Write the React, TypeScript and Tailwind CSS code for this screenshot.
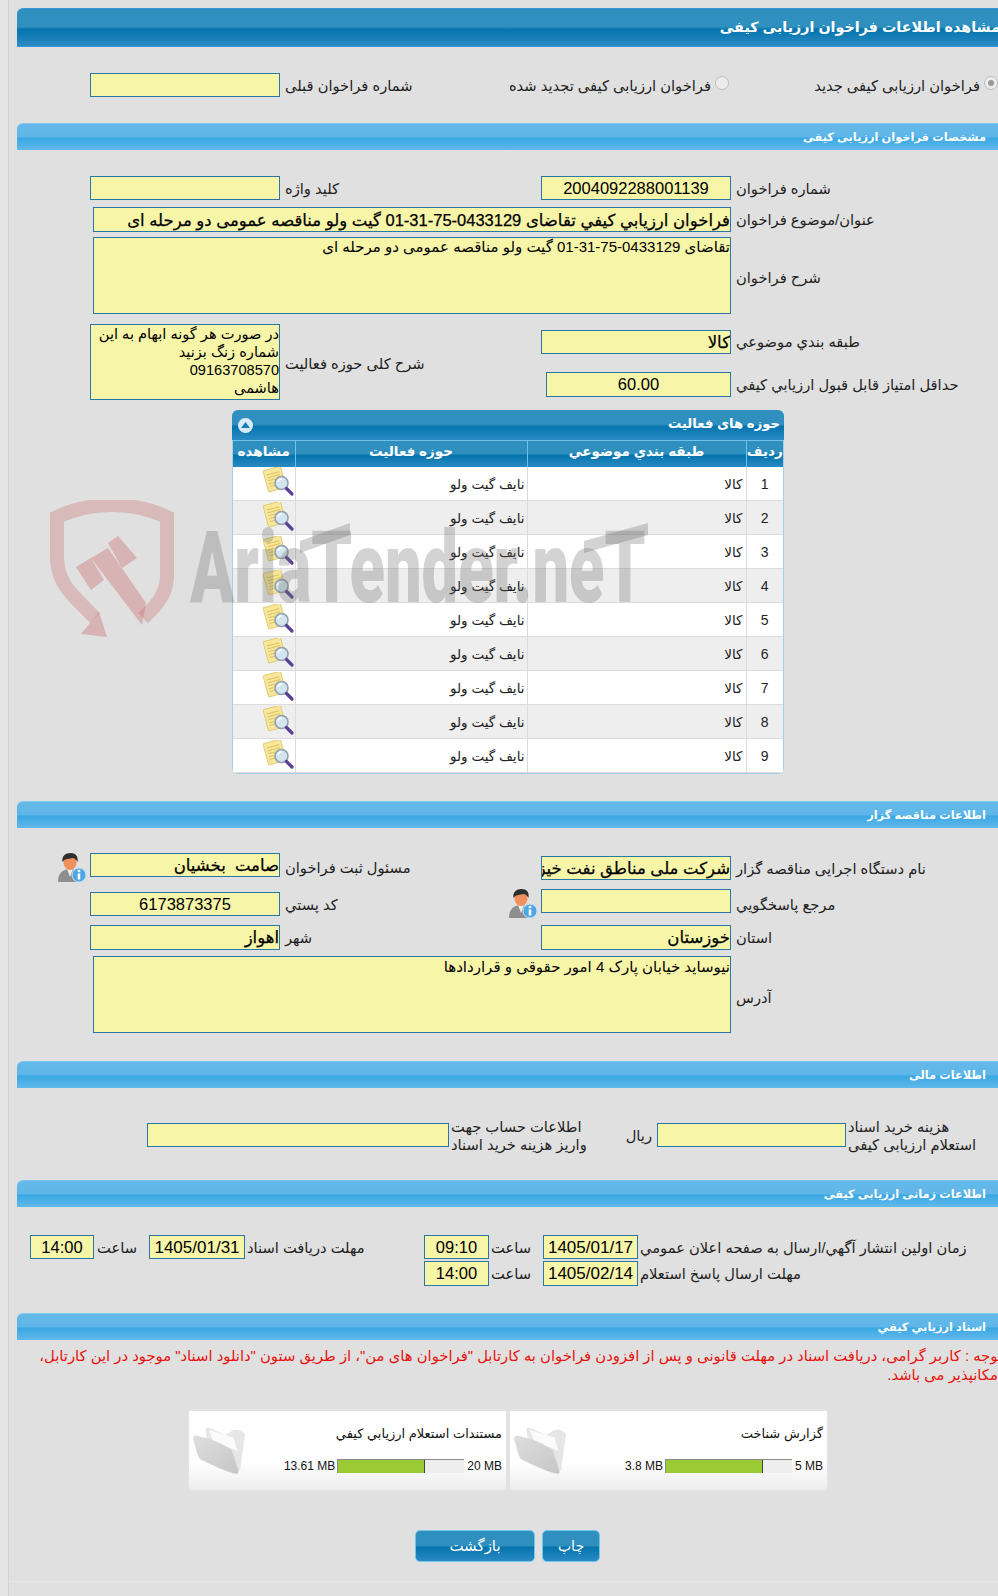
import React from "react";

const font = "font-['Liberation_Sans','DejaVu_Sans',sans-serif]";
const barGrad = "bg-[linear-gradient(#2f90bf_0%,#2f90bf_48%,#0574ad_55%,#2a8ac4_100%)]";
const strong = "[-webkit-text-stroke:0.25px_#000]";

function Inp({ className, t = "text-[16.5px] leading-[23px]", children }: { className: string; t?: string; children?: React.ReactNode }) {
  return (
    <div dir="rtl" className={`shrink-0 overflow-hidden whitespace-nowrap border border-[#2a77a6] bg-[#f7f5a8] text-black ${t} ${className}`}>
      {children}
    </div>
  );
}

function Num({ className, t = "text-[16.5px]", children }: { className: string; t?: string; children?: React.ReactNode }) {
  return (
    <div className={`shrink-0 overflow-hidden whitespace-nowrap border border-[#2a77a6] bg-[#f7f5a8] text-center leading-[23px] text-black ${t} ${className}`}>
      {children}
    </div>
  );
}

function Lbl({ className = "", m = "mt-[1px]", children }: { className?: string; m?: string; children: React.ReactNode }) {
  return (
    <div dir="rtl" className={`shrink-0 whitespace-nowrap text-left text-[14.7px] leading-[18px] text-[#222] ${m} ${className}`}>
      {children}
    </div>
  );
}

function Section({ title, className }: { title: string; className: string }) {
  return (
    <div dir="rtl" className={`h-[27px] rounded-t-[6px] border-t border-[#7cc8f0] bg-[linear-gradient(#64b9e9_0%,#5fb6e8_48%,#3aa8e2_55%,#62b9ec_100%)] pr-[20px] text-[11.4px] font-bold leading-[26px] text-white ${className}`}>
      {title}
    </div>
  );
}

function DocIcon() {
  return (
    <svg width="32" height="32" viewBox="0 0 32 32">
      <g transform="rotate(-15 12 12)">
        <rect x="2.500" y="1" width="18" height="22" rx="1" fill="#f8e79a" stroke="#e0cb7a" />
        <path d="M5 6h13M5 9h13M5 12h7M5 15h5M5 18h6" stroke="#dcc264" strokeWidth="1" />
      </g>
      <circle cx="18.500" cy="16" r="6.500" fill="#d3e5ee" stroke="#93a0ae" strokeWidth="1.600" />
      <path d="M15 15a4 4 0 0 1 4-3" stroke="#fff" strokeWidth="1.500" fill="none" />
      <path d="M23.500 21.500l5.500 5.500" stroke="#5a3f96" strokeWidth="3.200" strokeLinecap="round" />
    </svg>
  );
}

function PersonIcon() {
  return (
    <svg width="30" height="30" viewBox="0 0 30 30">
      <path d="M1 29c0-8 4-13 12-13s12 5 12 13z" fill="#8e8e8e" />
      <path d="M10 16l3 8 3-8z" fill="#ececec" />
      <ellipse cx="13" cy="9.500" rx="6.500" ry="7.500" fill="#f0905a" />
      <path d="M5.500 9c-1-6 3-9 8-9s8 3 7 9c-2-3-3-4-5-4-3 1-7 0-10 4z" fill="#2f2f2d" />
      <circle cx="22" cy="22" r="7" fill="#4ea6e2" stroke="#c6e3f7" />
      <rect x="20.700" y="20.500" width="2.600" height="6" fill="#fff" />
      <rect x="20.700" y="16.800" width="2.600" height="2.400" fill="#fff" />
    </svg>
  );
}

function FolderIcon() {
  return (
    <svg width="57" height="53" viewBox="0 35 170 160">
      <defs>
        <linearGradient id="fold" x1="0" y1="0" x2="1" y2="1">
          <stop offset="0" stopColor="#dedede" />
          <stop offset="1" stopColor="#c6c6c6" />
        </linearGradient>
      </defs>
      <path d="M45 45Q50 38 60 42L105 62 125 50Q150 40 165 60L150 170 60 130Z" fill="#e6e6e6" />
      <path d="M55 46 130 70 142 110 70 82Z" fill="#fbfbfb" />
      <path d="M8 72Q10 62 20 65L60 75Q90 85 125 108L145 170Q148 182 130 178 90 165 30 135 25 130 22 120Z" fill="url(#fold)" stroke="#d6d6d6" />
    </svg>
  );
}

function Card({ title, used, max, pct }: { title: string; used: string; max: string; pct: number }) {
  return (
    <div className="flex h-[79px] w-[317px] shrink-0 bg-[linear-gradient(#ffffff_65%,#ececec_100%)] pl-[1px] pr-[4px] pt-[15px] shadow-[0_0_2px_#eaeaea]">
      <div className="shrink-0"><FolderIcon /></div>
      <div className="min-w-0 flex-1">
        <div dir="rtl" className="whitespace-nowrap text-[13px] leading-[16px] text-[#111]">{title}</div>
        <div className="mt-[16px] flex items-center justify-end text-[12px] leading-[16px] text-[#111]">
          <span>{used}</span>
          <div className="mx-[2px] h-[14px] w-[127px] border-l border-t border-[#8a8a8a] bg-[#eeeeee]">
            <div className="h-full border-r border-[#444] bg-[#9acb34]" style={{ width: `${pct}%` }} />
          </div>
          <span className="ml-[1px]">{max}</span>
        </div>
      </div>
    </div>
  );
}

const rows = [1, 2, 3, 4, 5, 6, 7, 8, 9];

export default function App() {
  return (
    <div className={`relative flex h-[1596px] w-[998px] overflow-hidden bg-[#e0e0e0] ${font}`}>
      <div className="h-full w-[9px] shrink-0 border-r border-[#d2d2d2] bg-[#e4e4e4]" />
      <div className="w-[997px] shrink-0 pl-[8px]">
        <div dir="rtl" className={`mt-[8px] h-[39px] rounded-t-[6px] border-y border-[#3a96d6] ${barGrad} pr-[6px] text-[14.3px] font-bold leading-[36px] text-white`}>
          مشاهده اطلاعات فراخوان ارزیابی کیفی
        </div>

        <div className="mt-[26px] flex h-[24px] items-center">
          <div className="flex w-[488px] shrink-0 items-center pl-[73px]">
            <Inp className="h-[24px] w-[190px]" />
            <Lbl className="ml-[5px]">شماره فراخوان قبلی</Lbl>
          </div>
          <div className="flex w-[307px] shrink-0 items-center justify-end pr-[83px]">
            <Lbl>فراخوان ارزیابی کیفی تجدید شده</Lbl>
            <span className="ml-[4px] h-[14px] w-[14px] shrink-0 -translate-y-[2px] rounded-full border border-[#bdbdbd] bg-[#ececec]" />
          </div>
          <div className="flex w-[186px] shrink-0 items-center justify-end">
            <Lbl>فراخوان ارزیابی کیفی جدید</Lbl>
            <span className="ml-[4px] flex h-[14px] w-[14px] shrink-0 -translate-y-[2px] items-center justify-center rounded-full border border-[#bdbdbd] bg-[#ececec]">
              <span className="h-[6px] w-[6px] rounded-full bg-[#9a9a9a]" />
            </span>
          </div>
        </div>

        <Section title="مشخصات فراخوان ارزیابی کیفی" className="mt-[26px]" />

        <div className="mt-[26px] flex h-[24px] items-center">
          <div className="flex w-[524px] shrink-0 items-center pl-[73px]">
            <Inp className="h-[24px] w-[190px]" />
            <Lbl className="ml-[5px]">کلید واژه</Lbl>
          </div>
          <Num className="h-[24px] w-[190px]">2004092288001139</Num>
          <Lbl className="ml-[5px]">شماره فراخوان</Lbl>
        </div>

        <div className="mt-[7px] flex h-[25px] items-center pl-[76px]">
          <Inp className={`h-[25px] w-[638px] ${strong}`} t="text-[16.5px] leading-[24px]">فراخوان ارزيابي كيفي تقاضای 0433129-75-31-01 گیت ولو مناقصه عمومی دو مرحله ای</Inp>
          <Lbl className="ml-[5px]">عنوان/موضوع فراخوان</Lbl>
        </div>

        <div className="mt-[5px] flex h-[77px] items-center pl-[76px]">
          <Inp className="h-[77px] w-[638px]" t="text-[15px] leading-[18px]">تقاضای 0433129-75-31-01 گیت ولو مناقصه عمومی دو مرحله ای</Inp>
          <Lbl className="ml-[5px]" m="mt-[4px]">شرح فراخوان</Lbl>
        </div>

        <div className="mt-[10px] flex h-[76px] items-start">
          <div className="flex w-[524px] shrink-0 items-center pl-[73px]">
            <Inp className="h-[76px] w-[190px]" t="text-[14.6px] leading-[18px]">
              در صورت هر گونه ابهام به این
              <br />
              شماره زنگ بزنید
              <br />
              09163708570
              <br />
              هاشمی
            </Inp>
            <Lbl className="ml-[5px]" m="mt-[3px]">شرح کلی حوزه فعالیت</Lbl>
          </div>
          <div>
            <div className="mt-[6px] flex h-[24px] items-center">
              <Inp className={`h-[24px] w-[190px] ${strong}`}>کالا</Inp>
              <Lbl className="ml-[5px]" m="mt-0">طبقه بندي موضوعي</Lbl>
            </div>
            <div className="mt-[18px] flex h-[25px] items-center pl-[5px]">
              <Num className="h-[25px] w-[185px]">60.00</Num>
              <Lbl className="ml-[5px]">حداقل امتیاز قابل قبول ارزیابي کیفي</Lbl>
            </div>
          </div>
        </div>

        <div className="ml-[215px] mt-[10px] h-[364px] w-[552px] rounded-[6px] border-x border-b-2 border-[#a5cfe9] bg-white">
          <div className={`-mx-[1px] flex h-[30px] items-center justify-between rounded-t-[6px] ${barGrad} pl-[6px] pr-[4px]`}>
            <span className="flex h-[15px] w-[15px] items-center justify-center rounded-full bg-[#d9ebf7]">
              <svg width="9" height="6" viewBox="0 0 9 6"><path d="M0 6l4.500-6 4.500 6z" fill="#1d80b4" /></svg>
            </span>
            <span dir="rtl" className="-translate-y-[1px] text-[13.2px] font-bold text-white">حوزه های فعالیت</span>
          </div>
          <table dir="rtl" className="w-full table-fixed border-collapse">
            <colgroup>
              <col className="w-[37px]" />
              <col className="w-[219px]" />
              <col className="w-[232px]" />
              <col />
            </colgroup>
            <thead>
              <tr className={`h-[26px] ${barGrad} text-[13.5px] font-bold text-white`}>
                <th className="border-l border-t border-[#6fc0ea] pb-[3px] font-bold">ردیف</th>
                <th className="border-l border-t border-[#6fc0ea] pb-[3px] font-bold">طبقه بندي موضوعي</th>
                <th className="border-l border-t border-[#6fc0ea] pb-[3px] font-bold">حوزه فعالیت</th>
                <th className="border-t border-[#6fc0ea] pb-[3px] font-bold">مشاهده</th>
              </tr>
            </thead>
            <tbody>
              {rows.map((n) => (
                <tr key={n} className={`h-[34px] border-b border-[#dcdcdc] text-[13.5px] text-[#222] ${n % 2 === 0 ? "bg-[#eeeeee]" : "bg-white"}`}>
                  <td className="border-l border-[#dcdcdc] pt-[2px] text-center text-[14px]">{n}</td>
                  <td className="border-l border-[#dcdcdc] pr-[3px] pt-[3px]">کالا</td>
                  <td className="border-l border-[#dcdcdc] pr-[2px] pt-[3px]">نایف گیت ولو</td>
                  <td className="p-0"><div className="flex justify-start"><DocIcon /></div></td>
                </tr>
              ))}
            </tbody>
          </table>
        </div>

        <Section title="اطلاعات مناقصه گزار" className="mt-[27px]" />

        <div className="mt-[25px] flex h-[27px] items-start">
          <div className="flex w-[524px] shrink-0 items-start pl-[40px]">
            <div className="w-[33px] shrink-0"><PersonIcon /></div>
            <Inp className={`h-[24px] w-[190px] ${strong}`}>صامت&nbsp;&nbsp;بخشیان</Inp>
            <Lbl className="ml-[5px]" m="mt-[6px]">مسئول ثبت فراخوان</Lbl>
          </div>
          <div className="mt-[3px] flex items-start">
            <Inp className={`h-[24px] w-[190px] ${strong}`}>شرکت ملی مناطق نفت خیز جنوب</Inp>
            <Lbl className="ml-[5px]" m="mt-[4px]">نام دستگاه اجرایی مناقصه گزار</Lbl>
          </div>
        </div>

        <div className="mt-[9px] flex h-[30px] items-start">
          <div className="mt-[3px] flex w-[524px] shrink-0 items-start pl-[73px]">
            <Num className="h-[24px] w-[190px]">6173873375</Num>
            <Lbl className="ml-[5px]" m="mt-[4px]">کد پستي</Lbl>
          </div>
          <div className="-ml-[33px] flex items-start">
            <div className="w-[33px] shrink-0"><PersonIcon /></div>
            <Inp className="h-[24px] w-[190px]" />
            <Lbl className="ml-[5px]" m="mt-[7px]">مرجع پاسخگویي</Lbl>
          </div>
        </div>

        <div className="mt-[6px] flex h-[25px] items-center">
          <div className="flex w-[524px] shrink-0 items-center pl-[73px]">
            <Inp className={`h-[25px] w-[190px] ${strong}`}>اهواز</Inp>
            <Lbl className="ml-[5px]">شهر</Lbl>
          </div>
          <Inp className={`h-[25px] w-[190px] ${strong}`}>خوزستان</Inp>
          <Lbl className="ml-[5px]">استان</Lbl>
        </div>

        <div className="mt-[6px] flex h-[77px] items-center pl-[76px]">
          <Inp className="h-[77px] w-[638px]" t="text-[15px] leading-[20px]">نیوساید خیابان پارک 4 امور حقوقی و قراردادها</Inp>
          <Lbl className="ml-[5px]" m="mt-[6px]">آدرس</Lbl>
        </div>

        <Section title="اطلاعات مالی" className="mt-[28px]" />

        <div className="mt-[29px] flex h-[36px] items-center">
          <Inp className="ml-[130px] h-[24px] w-[302px]" />
          <Lbl className="ml-[2px] w-[177px]">اطلاعات حساب جهت<br />واریز هزینه خرید اسناد</Lbl>
          <Lbl className="w-[24px]">ریال</Lbl>
          <Inp className="ml-[5px] h-[24px] w-[189px]" />
          <Lbl className="ml-[2px]">هزینه خرید اسناد<br />استعلام ارزیابی کیفی</Lbl>
        </div>

        <Section title="اطلاعات زمانی ارزیابی کیفی" className="mt-[27px]" />

        <div className="mt-[28px] flex h-[24px] items-center">
          <Num className="ml-[13px] h-[24px] w-[64px]">14:00</Num>
          <Lbl className="ml-[3px] w-[52px]">ساعت</Lbl>
          <Num className="h-[24px] w-[96px]" t="text-[17px]">1405/01/31</Num>
          <Lbl className="ml-[2px] w-[177px]">مهلت دریافت اسناد</Lbl>
          <Num className="h-[24px] w-[65px]">09:10</Num>
          <Lbl className="ml-[2px] w-[52px]">ساعت</Lbl>
          <Num className="h-[24px] w-[95px]" t="text-[17px]">1405/01/17</Num>
          <Lbl className="ml-[2px]">زمان اولین انتشار آگهي/ارسال به صفحه اعلان عمومي</Lbl>
        </div>
        <div className="mt-[2px] flex h-[25px] items-center pl-[407px]">
          <Num className="h-[25px] w-[65px]">14:00</Num>
          <Lbl className="ml-[2px] w-[52px]">ساعت</Lbl>
          <Num className="h-[25px] w-[95px]" t="text-[17px]">1405/02/14</Num>
          <Lbl className="ml-[2px]">مهلت ارسال پاسخ استعلام</Lbl>
        </div>

        <Section title="اسناد ارزیابي کیفي" className="mt-[27px]" />

        <div dir="rtl" className="mt-[7px] h-[38px] pr-[4px] text-[14.8px] leading-[19px] text-[#e8120c]">
          توجه : کاربر گرامی، دریافت اسناد در مهلت قانونی و پس از افزودن فراخوان به کارتابل "فراخوان های من"، از طریق ستون "دانلود اسناد" موجود در این کارتابل، امکانپذیر می باشد.
        </div>

        <div className="ml-[172px] mt-[26px] flex gap-[4px]">
          <Card title="مستندات استعلام ارزيابي كيفي" used="13.61 MB" max="20 MB" pct={69} />
          <Card title="گزارش شناخت" used="3.8 MB" max="5 MB" pct={77} />
        </div>

        <div className="ml-[398px] mt-[40px] flex gap-[7px]">
          <button dir="rtl" className={`h-[32px] w-[120px] rounded-[5px] border border-[#72c4ea] ${barGrad} text-[15px] text-white`}>بازگشت</button>
          <button dir="rtl" className={`h-[32px] w-[58px] rounded-[5px] border border-[#72c4ea] ${barGrad} text-[14px] text-white`}>چاپ</button>
        </div>
        <div className="-ml-[17px] mt-[19px] w-[1020px] border-t border-[#e6e6e6]" />
      </div>

      <div className="pointer-events-none absolute left-[50px] top-[500px] flex select-none">
        <svg width="610" height="140" viewBox="50 500 610 140">
          <path d="M95 618C72 594 58 585 57 558V517C92 501 132 501 167 517V578C166 596 154 608 143 618" fill="none" stroke="#c86a6a" strokeOpacity="0.32" strokeWidth="14" />
          <path d="M99 612l8 25-26-3z" fill="#c86a6a" fillOpacity="0.38" />
          <path d="M76 567l15-9 13 22-13 10zM91 558l17-10 38 55-4 22z" fill="#c86a6a" fillOpacity="0.38" />
          <path d="M108 543l10-7 19 22-15 10z" fill="#c86a6a" fillOpacity="0.38" />
          <path d="M300 541 350 523V535L300 553zM584 541 648 523V535L584 553z" fill="#6e6e6e" fillOpacity="0.3" />
        </svg>
      </div>
      <div className="pointer-events-none absolute left-[190px] top-[518px] origin-left scale-x-[0.65] select-none whitespace-nowrap font-['Roboto',sans-serif] text-[100px] font-black leading-[100px] text-[rgba(110,110,110,0.3)]">
        AriaTender.neT
      </div>
    </div>
  );
}
